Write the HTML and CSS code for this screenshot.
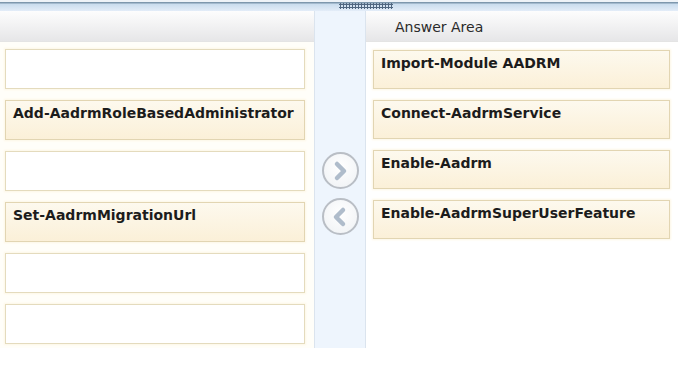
FILE: index.html
```html
<!DOCTYPE html>
<html lang="en">
<head>
  <meta charset="UTF-8" />
  <title>Answer Area</title>
  <link rel="stylesheet" href="styles.css">
</head>
<body>
  <div class="frame">
    <div class="topbar"><span class="grip"></span></div>

    <div class="board">
      <div class="col left">
        <div class="head"></div>
        <div class="list">
          <div class="slot"></div>
          <div class="slot filled">Add-AadrmRoleBasedAdministrator</div>
          <div class="slot"></div>
          <div class="slot filled">Set-AadrmMigrationUrl</div>
          <div class="slot"></div>
          <div class="slot"></div>
        </div>
      </div>

      <div class="col mid">
        <button class="move-btn" title="Move right">
          <svg width="32" height="32" viewBox="0 0 32 32"><polyline points="13,9 20,16 13,23" /></svg>
        </button>
        <button class="move-btn" title="Move left">
          <svg width="32" height="32" viewBox="0 0 32 32"><polyline points="19,9 12,16 19,23" /></svg>
        </button>
      </div>

      <div class="col right">
        <div class="head">Answer Area</div>
        <div class="list">
          <div class="slot filled">Import-Module AADRM</div>
          <div class="slot filled">Connect-AadrmService</div>
          <div class="slot filled">Enable-Aadrm</div>
          <div class="slot filled">Enable-AadrmSuperUserFeature</div>
        </div>
      </div>
    </div>
  </div>
</body>
</html>
```

FILE: styles.css
```css
* {
  box-sizing: border-box;
}

html, body {
  margin: 0;
  background: #ffffff;
  font-family: "DejaVu Sans", Verdana, sans-serif;
  color: #1c1c1c;
}

.frame {
  width: 678px;
}

.topbar {
  height: 11px;
  border-top: 2px solid #eef3f8;
  background: linear-gradient(#7d97ad 0, #7d97ad 1px, #c9dcee 2px, #e3edf8 100%);
  display: flex;
  justify-content: center;
  padding-left: 54px;
}

.grip {
  width: 54px;
  height: 6px;
  margin-top: 1px;
  background: radial-gradient(circle, #4f6680 1px, transparent 1.3px) 0 0 / 3px 3px;
}

.board {
  display: flex;
  height: 337px;
}

.col {
  display: flex;
  flex-direction: column;
}

.left {
  width: 314px;
  background: #fffef9;
}

.right {
  width: 312px;
  background: #ffffff;
}

.head {
  height: 31px;
  background: linear-gradient(#fdfdfd, #e6e6e8);
  border-bottom: 1px solid #e4e4e4;
  font-size: 14px;
  padding: 8px 0 0 29px;
  color: #2a2a2a;
}

.mid {
  width: 52px;
  background: #eef5fd;
  border-left: 1px solid #dbe4ee;
  border-right: 1px solid #dbe4ee;
  align-items: center;
  padding-top: 141px;
  gap: 9px;
}

.move-btn {
  width: 37px;
  height: 37px;
  padding: 0;
  border-radius: 50%;
  border: 2px solid #b9bec5;
  background: radial-gradient(circle at 50% 40%, #ffffff, #eef1f4);
  display: flex;
  align-items: center;
  justify-content: center;
  cursor: pointer;
}

.move-btn polyline {
  fill: none;
  stroke: #afbccb;
  stroke-width: 4.5;
  stroke-linecap: round;
  stroke-linejoin: round;
}

.list {
  display: flex;
  flex-direction: column;
}

.left .list {
  padding: 7px 9px 0 5px;
  gap: 11px;
}

.right .list {
  padding: 8px 8px 0 7px;
  gap: 11px;
}

.slot {
  height: 40px;
  background: #ffffff;
  border: 1px solid #e4dbbd;
  box-shadow: 0 0 2px 1px #fdf7e6;
  font-size: 14px;
  font-weight: bold;
  padding: 4px 7px;
  white-space: nowrap;
}

.right .slot {
  height: 39px;
}

.slot.filled {
  background: linear-gradient(#fdf9ee, #fbf0d8);
  border-color: #e2d5b2;
}
```
